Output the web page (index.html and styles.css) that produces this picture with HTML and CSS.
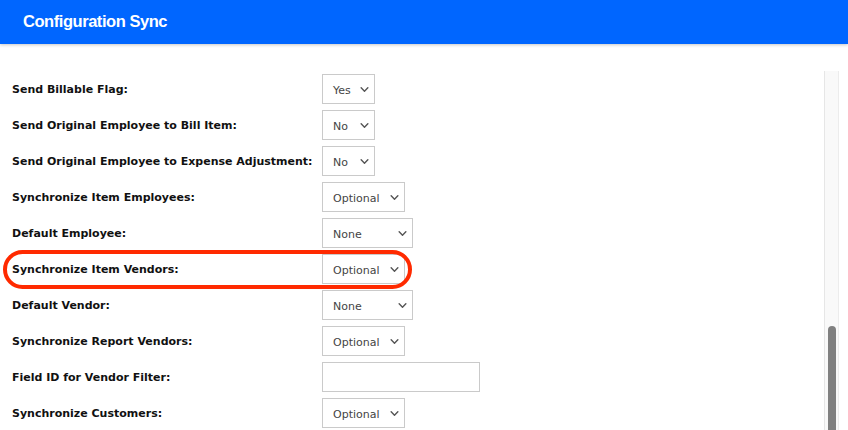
FILE: index.html
```html
<!DOCTYPE html>
<html>
<head>
<meta charset="utf-8">
<link rel="stylesheet" href="styles.css">
</head>
<body>
<div class="page">
  <header class="header"><h1 class="title">Configuration Sync</h1></header>
  <div class="main">
    <div class="content">
      <div class="row"><span class="label">Send Billable Flag:</span><div class="select w-yn"><span>Yes</span><svg class="chev" viewBox="0 0 10 6"><path d="M1 1l4 4 4-4"/></svg></div></div>
      <div class="row"><span class="label">Send Original Employee to Bill Item:</span><div class="select w-yn"><span>No</span><svg class="chev" viewBox="0 0 10 6"><path d="M1 1l4 4 4-4"/></svg></div></div>
      <div class="row"><span class="label">Send Original Employee to Expense Adjustment:</span><div class="select w-yn"><span>No</span><svg class="chev" viewBox="0 0 10 6"><path d="M1 1l4 4 4-4"/></svg></div></div>
      <div class="row"><span class="label">Synchronize Item Employees:</span><div class="select w-opt"><span>Optional</span><svg class="chev" viewBox="0 0 10 6"><path d="M1 1l4 4 4-4"/></svg></div></div>
      <div class="row"><span class="label">Default Employee:</span><div class="select w-none"><span>None</span><svg class="chev" viewBox="0 0 10 6"><path d="M1 1l4 4 4-4"/></svg></div></div>
      <div class="row highlight"><span class="label">Synchronize Item Vendors:</span><div class="select w-opt"><span>Optional</span><svg class="chev" viewBox="0 0 10 6"><path d="M1 1l4 4 4-4"/></svg></div></div>
      <div class="row"><span class="label">Default Vendor:</span><div class="select w-none"><span>None</span><svg class="chev" viewBox="0 0 10 6"><path d="M1 1l4 4 4-4"/></svg></div></div>
      <div class="row"><span class="label">Synchronize Report Vendors:</span><div class="select w-opt"><span>Optional</span><svg class="chev" viewBox="0 0 10 6"><path d="M1 1l4 4 4-4"/></svg></div></div>
      <div class="row"><span class="label">Field ID for Vendor Filter:</span><div class="input"></div></div>
      <div class="row"><span class="label">Synchronize Customers:</span><div class="select w-opt"><span>Optional</span><svg class="chev" viewBox="0 0 10 6"><path d="M1 1l4 4 4-4"/></svg></div></div>
    </div>
    <div class="scrolltrack"><div class="thumb"></div></div>
  </div>
</div>
</body>
</html>
```

FILE: styles.css
```css
html, body {
  margin: 0;
  padding: 0;
  background: #fff;
}
body {
  width: 848px;
  height: 430px;
  overflow: hidden;
  font-family: "DejaVu Sans", Verdana, sans-serif;
}
.page {
  display: flex;
  flex-direction: column;
  height: 430px;
}
.header {
  height: 44px;
  flex: none;
  background: #0066ff;
  box-shadow: 0 1px 3px rgba(0, 0, 0, 0.22);
  display: flex;
  align-items: center;
  padding-left: 23px;
  position: relative;
  z-index: 1;
}
.title {
  margin: 0 0 2px 0;
  color: #fff;
  font-family: "Liberation Sans", Arial, sans-serif;
  font-weight: bold;
  font-size: 16.5px;
  letter-spacing: -0.45px;
}
.main {
  flex: 1;
  display: flex;
  min-height: 0;
}
.content {
  flex: 1;
  padding: 30px 0 0 12px;
  display: flex;
  flex-direction: column;
  gap: 6px;
}
.row {
  display: flex;
  align-items: center;
  height: 30px;
  flex: none;
}
.label {
  width: 310px;
  flex: none;
  font-weight: bold;
  font-size: 11px;
  color: #111;
  padding-top: 1px;
}
.select {
  box-sizing: border-box;
  height: 30px;
  border: 1px solid #cacaca;
  display: flex;
  align-items: center;
  justify-content: space-between;
  padding: 2px 5px 0 10px;
  font-size: 11px;
  color: #444;
}
.w-yn { width: 53px; }
.w-opt { width: 83px; }
.w-none { width: 91px; }
.chev {
  width: 9px;
  height: 5px;
  margin-bottom: 2px;
  fill: none;
  stroke: #555;
  stroke-width: 1.7;
  stroke-linecap: round;
  stroke-linejoin: round;
}
.input {
  box-sizing: border-box;
  width: 158px;
  height: 30px;
  border: 1px solid #cacaca;
}
.highlight {
  position: relative;
}
.highlight::after {
  content: "";
  position: absolute;
  left: -9px;
  top: -4px;
  width: 409px;
  height: 39px;
  box-sizing: border-box;
  border: 4px solid #ff2a00;
  border-radius: 20px;
  pointer-events: none;
}
.scrolltrack {
  width: 15px;
  box-sizing: border-box;
  margin: 27px 9px 0 0;
  background: #f9f9f9;
  border-left: 1px solid #e6e6e6;
  border-right: 1px solid #ececec;
  display: flex;
  flex-direction: column;
  padding: 255px 2px 0 3px;
}
.thumb {
  flex: 1;
  background: #808080;
  border-radius: 4px 4px 0 0;
}
```
